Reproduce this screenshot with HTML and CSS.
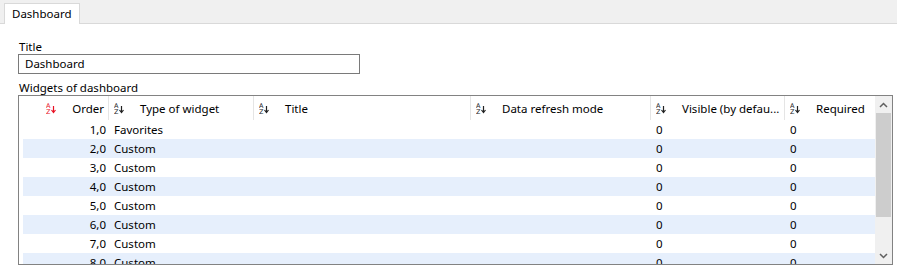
FILE: index.html
```html
<!DOCTYPE html>
<html lang="en">
<head>
  <meta charset="UTF-8" />
  <title>Dashboard</title>
  <link rel="stylesheet" href="styles.css">
</head>
<body>
  <div class="tabs">
    <div class="tab active">Dashboard</div>
  </div>

  <div class="panel">
    <label class="field-label">Title</label>
    <div class="text-input">Dashboard</div>

    <label class="field-label widgets-label">Widgets of dashboard</label>
    <div class="grid">
      <div class="grid-main">
        <div class="grid-head">
          <div class="hcell first"><svg class="sort-icon red" viewBox="0 0 10 12"><text x="0" y="5.5">A</text><text x="0" y="11.5">Z</text><path d="M7.5 4v6M5.5 8l2 2.5 2-2.5"/></svg><span>Order</span></div>
          <div class="hcell"><svg class="sort-icon" viewBox="0 0 10 12"><text x="0" y="5.5">A</text><text x="0" y="11.5">Z</text><path d="M7.5 4v6M5.5 8l2 2.5 2-2.5"/></svg><span>Type of widget</span></div>
          <div class="hcell"><svg class="sort-icon" viewBox="0 0 10 12"><text x="0" y="5.5">A</text><text x="0" y="11.5">Z</text><path d="M7.5 4v6M5.5 8l2 2.5 2-2.5"/></svg><span>Title</span></div>
          <div class="hcell"><svg class="sort-icon" viewBox="0 0 10 12"><text x="0" y="5.5">A</text><text x="0" y="11.5">Z</text><path d="M7.5 4v6M5.5 8l2 2.5 2-2.5"/></svg><span>Data refresh mode</span></div>
          <div class="hcell"><svg class="sort-icon" viewBox="0 0 10 12"><text x="0" y="5.5">A</text><text x="0" y="11.5">Z</text><path d="M7.5 4v6M5.5 8l2 2.5 2-2.5"/></svg><span>Visible (by defau...</span></div>
          <div class="hcell"><svg class="sort-icon" viewBox="0 0 10 12"><text x="0" y="5.5">A</text><text x="0" y="11.5">Z</text><path d="M7.5 4v6M5.5 8l2 2.5 2-2.5"/></svg><span>Required</span></div>
        </div>

        <div class="rows">
          <div class="row"><div class="cell num">1,0</div><div class="cell">Favorites</div><div class="cell"></div><div class="cell"></div><div class="cell">0</div><div class="cell">0</div></div>
          <div class="row"><div class="cell num">2,0</div><div class="cell">Custom</div><div class="cell"></div><div class="cell"></div><div class="cell">0</div><div class="cell">0</div></div>
          <div class="row"><div class="cell num">3,0</div><div class="cell">Custom</div><div class="cell"></div><div class="cell"></div><div class="cell">0</div><div class="cell">0</div></div>
          <div class="row"><div class="cell num">4,0</div><div class="cell">Custom</div><div class="cell"></div><div class="cell"></div><div class="cell">0</div><div class="cell">0</div></div>
          <div class="row"><div class="cell num">5,0</div><div class="cell">Custom</div><div class="cell"></div><div class="cell"></div><div class="cell">0</div><div class="cell">0</div></div>
          <div class="row"><div class="cell num">6,0</div><div class="cell">Custom</div><div class="cell"></div><div class="cell"></div><div class="cell">0</div><div class="cell">0</div></div>
          <div class="row"><div class="cell num">7,0</div><div class="cell">Custom</div><div class="cell"></div><div class="cell"></div><div class="cell">0</div><div class="cell">0</div></div>
          <div class="row"><div class="cell num">8,0</div><div class="cell">Custom</div><div class="cell"></div><div class="cell"></div><div class="cell">0</div><div class="cell">0</div></div>
        </div>
      </div>

      <div class="scrollbar">
        <div class="arrow up"><svg viewBox="0 0 9 6"><path d="M1 5l3.5-3.5L8 5"/></svg></div>
        <div class="track"><div class="thumb"></div></div>
        <div class="arrow down"><svg viewBox="0 0 9 6"><path d="M1 1l3.5 3.5L8 1"/></svg></div>
      </div>
    </div>
  </div>
</body>
</html>
```

FILE: styles.css
```css
* {
  margin: 0;
  padding: 0;
  box-sizing: border-box;
}

body {
  font-family: 'Noto Sans', 'Open Sans', sans-serif;
  font-size: 11.5px;
  color: #000;
  background: #fff;
  width: 897px;
  height: 270px;
  overflow: hidden;
}

/* tab strip */
.tabs {
  height: 24px;
  background: #f0f0f0;
  border-bottom: 1px solid #d9d9d9;
  padding: 3px 0 0 4px;
  display: flex;
}

.tab {
  height: 21px;
  padding: 0 7px;
  line-height: 19px;
  background: #fff;
  border: 1px solid #d9d9d9;
  border-bottom: none;
  margin-bottom: -1px;
}

.panel {
  padding: 15px 0 0 18px;
}

.field-label {
  display: block;
  height: 15px;
  line-height: 15px;
  padding-left: 1px;
}

.text-input {
  width: 342px;
  height: 20px;
  border: 1px solid #7a7a7a;
  padding-left: 6px;
  line-height: 17px;
}

.widgets-label {
  margin-top: 6px;
}

/* grid */
.grid {
  width: 875px;
  height: 170px;
  border: 1px solid #828282;
  display: flex;
  overflow: hidden;
}

.grid-main {
  flex: 1;
  overflow: hidden;
  padding-left: 4px;
}

.grid-head,
.row {
  display: grid;
  grid-template-columns: 85px 145px 217px 180px 134px 91px;
}

.grid-head {
  height: 24px;
}

.hcell {
  display: flex;
  align-items: center;
  gap: 16px;
  padding-left: 5px;
  border-left: 1px solid #e5e5e5;
  white-space: nowrap;
}

.hcell.first {
  border-left: none;
  justify-content: flex-end;
  padding-right: 4px;
}

.sort-icon {
  width: 10px;
  height: 12px;
  flex: none;
  fill: #222;
  stroke: none;
}

.sort-icon text {
  font-family: 'DejaVu Sans', sans-serif;
  font-size: 6.5px;
}

.sort-icon path {
  fill: none;
  stroke: #222;
  stroke-width: 1.2;
}

.sort-icon.red {
  fill: #e81123;
}

.sort-icon.red path {
  stroke: #e81123;
}

.row {
  height: 19px;
  line-height: 19px;
}

.row:nth-child(even) {
  background: #e6effc;
}

.cell {
  padding-left: 6px;
  white-space: nowrap;
}

.cell.num {
  text-align: right;
  padding: 0 2px 0 0;
}

/* scrollbar */
.scrollbar {
  width: 17px;
  background: #f0f0f0;
  display: flex;
  flex-direction: column;
}

.arrow {
  height: 17px;
  display: flex;
  align-items: center;
  justify-content: center;
}

.arrow svg {
  width: 9px;
  height: 6px;
  fill: none;
  stroke: #606060;
  stroke-width: 1.5;
}

.track {
  flex: 1;
  padding: 0 1px;
}

.thumb {
  height: 104px;
  background: #cdcdcd;
}
```
